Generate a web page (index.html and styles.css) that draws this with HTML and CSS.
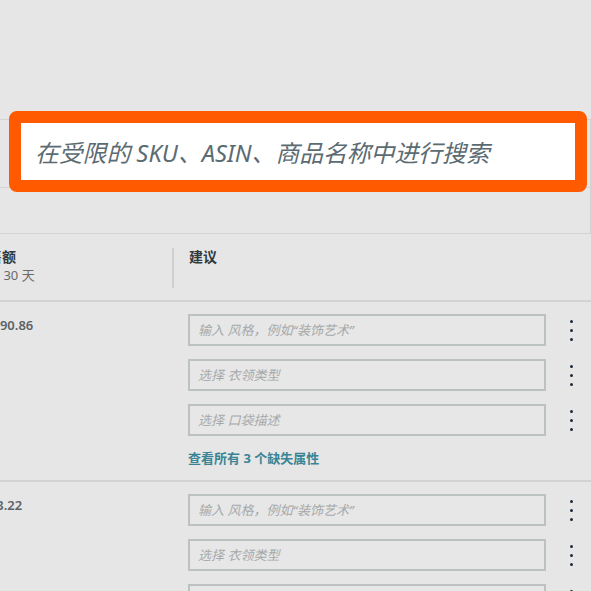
FILE: index.html
```html
<!DOCTYPE html>
<html lang="zh-CN">
<head>
  <meta charset="UTF-8">
  <meta name="viewport" content="width=device-width, initial-scale=1.0">
  <title>受限商品 - 建议</title>
  <link rel="stylesheet" href="styles.css">
</head>
<body>

  <!-- Search Panel -->
  <div class="search-panel">
    <div class="search-row"></div>
    <!-- Highlighted search box -->
    <div class="highlight">
      <span class="search-text">在受限的 SKU、ASIN、商品名称中进行搜索</span>
    </div>
  </div>

  <!-- Table Header -->
  <div class="table-head">
    <div class="col-a">
      <div class="head-title">销售额</div>
      <div class="head-sub">过去 30 天</div>
    </div>
    <div class="divider"></div>
    <div class="col-b">
      <div class="head-title">建议</div>
    </div>
  </div>

  <!-- Row 1 -->
  <div class="table-row">
    <div class="col-a">
      <div class="amount">$1,290.86</div>
    </div>
    <div class="col-b">
      <div class="field">
        <div class="input">输入 风格，例如“装饰艺术”</div>
        <div class="kebab"><span></span><span></span><span></span></div>
      </div>
      <div class="field">
        <div class="input">选择 衣领类型</div>
        <div class="kebab"><span></span><span></span><span></span></div>
      </div>
      <div class="field">
        <div class="input">选择 口袋描述</div>
        <div class="kebab"><span></span><span></span><span></span></div>
      </div>
      <a class="see-all" href="#">查看所有 3 个缺失属性</a>
    </div>
  </div>

  <!-- Row 2 -->
  <div class="table-row">
    <div class="col-a">
      <div class="amount">$643.22</div>
    </div>
    <div class="col-b">
      <div class="field">
        <div class="input">输入 风格，例如“装饰艺术”</div>
        <div class="kebab"><span></span><span></span><span></span></div>
      </div>
      <div class="field">
        <div class="input">选择 衣领类型</div>
        <div class="kebab"><span></span><span></span><span></span></div>
      </div>
      <div class="field">
        <div class="input">选择 口袋描述</div>
        <div class="kebab"><span></span><span></span><span></span></div>
      </div>
    </div>
  </div>

</body>
</html>
```

FILE: styles.css
```css
/* Basic Styles */
* {
  margin: 0;
  padding: 0;
  box-sizing: border-box;
  font-family: 'Noto Sans', 'Noto Sans CJK SC', sans-serif;
}

body {
  background-color: #e6e6e6;
  color: #333;
  width: 591px;
  height: 591px;
  overflow: hidden;
}

/* Search panel */
.search-panel {
  position: relative;
  margin-top: 119px;
  height: 115px;
  border-top: 1px solid #d3d3d3;
  border-right: 1px solid #d3d3d3;
  border-bottom: 1px solid #d3d3d3;
}

.search-row {
  height: 68px;
  border-bottom: 1px solid #d3d3d3;
}

.highlight {
  position: absolute;
  left: 9px;
  top: -9px;
  width: 578px;
  height: 81px;
  border: 12px solid #ff5a00;
  border-radius: 8px;
  background-color: #fff;
  display: flex;
  align-items: center;
  padding-left: 14px;
}

.search-text {
  font-size: 23.8px;
  font-style: italic;
  color: #5b6b72;
  white-space: nowrap;
}

/* Table */
.table-head {
  display: flex;
  height: 68px;
  border-bottom: 2px solid #d3d3d3;
}

.table-head .col-a {
  padding-top: 14px;
}

.col-a {
  margin-left: -26px;
  flex-shrink: 0;
  width: 198px;
}

.divider {
  width: 2px;
  height: 40px;
  margin-top: 14px;
  background-color: #d0d0d0;
}

.col-b {
  flex: 1;
  padding-left: 15px;
}

.table-head .col-b {
  padding-top: 14px;
}

.head-title {
  font-size: 14px;
  font-weight: bold;
  line-height: 18px;
  color: #2f3a3f;
}

.head-sub {
  font-size: 13px;
  line-height: 18px;
  color: #6a6a6a;
}

.table-row {
  display: flex;
  border-bottom: 2px solid #d3d3d3;
  padding-top: 12px;
  padding-bottom: 13px;
}

.table-row .col-a {
  width: 200px;
  padding-top: 2px;
}

.table-row .col-b {
  padding-left: 14px;
}

.amount {
  font-size: 13px;
  font-weight: 600;
  line-height: 18px;
  color: #5c6366;
}

.field {
  display: flex;
  align-items: center;
  margin-bottom: 13px;
}

.input {
  width: 358px;
  height: 32px;
  border: 2px solid #bcc1c1;
  background-color: #e7e7e7;
  padding-left: 8px;
  font-size: 13px;
  font-style: italic;
  line-height: 28px;
  color: #a6a9aa;
  white-space: nowrap;
}

.kebab {
  display: flex;
  flex-direction: column;
  gap: 6px;
  margin-left: 24px;
}

.kebab span {
  width: 3px;
  height: 3px;
  border-radius: 50%;
  background-color: #1d2a36;
}

.see-all {
  display: block;
  margin-top: 3px;
  font-size: 13px;
  font-weight: bold;
  line-height: 18px;
  color: #3a8595;
  text-decoration: none;
}
```
